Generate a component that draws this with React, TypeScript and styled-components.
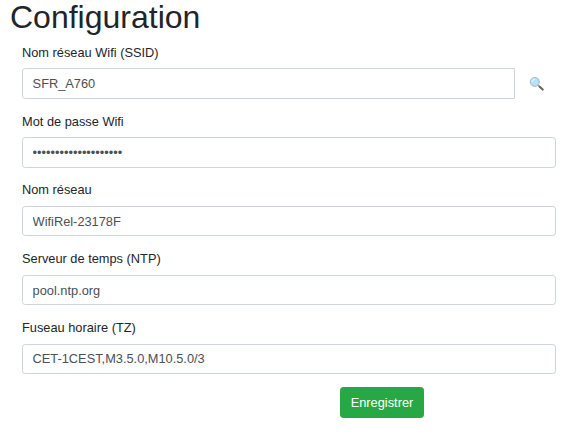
import React from "react";
import styled, { createGlobalStyle } from "styled-components";

const GlobalStyle = createGlobalStyle`
  *, *::before, *::after { box-sizing: border-box; }
  body {
    margin: 0;
    background: #fff;
    color: #212529;
    font: 400 12.8px/1.5 "Liberation Sans", Arial, sans-serif;
    overflow: hidden;
  }
`;

const Page = styled.main`
  display: flow-root;
  padding: 0 25.4px 0 10px;
`;

const Title = styled.h1`
  margin: -1.92px 0 6.4px;
  font-size: 32px;
  font-weight: 400;
  line-height: 1.2;
`;

const Form = styled.form`
  padding-left: 12px;
`;

const Field = styled.div`
  margin-bottom: 12.84px;
`;

const Label = styled.label`
  display: block;
  height: 19.2px;
  margin-bottom: 6.4px;
`;

const InputGroup = styled.div`
  display: flex;
`;

const Input = styled.input<{ $joined?: boolean }>`
  display: block;
  flex: 1;
  width: 100%;
  min-width: 0;
  height: 30.4px;
  padding: 4.8px 9.6px;
  border: 1px solid #ced4da;
  border-radius: ${(p) => (p.$joined ? "3.2px 0 0 3.2px" : "3.2px")};
  background: #fff;
  color: #495057;
  font: inherit;
  outline: none;
`;

const ScanButton = styled.button`
  display: flex;
  align-items: center;
  justify-content: center;
  width: 41px;
  height: 30.4px;
  padding: 0 0 0 4px;
  border: 0;
  background: transparent;
`;

const Actions = styled.div`
  display: flex;
  padding-left: 318px;
`;

const SaveButton = styled.button`
  width: 84px;
  height: 31px;
  padding: 1px 0 0;
  border: 1px solid #28a745;
  border-radius: 3.2px;
  background: #28a745;
  color: #fff;
  font: inherit;
`;

const SearchIcon = () => (
  <svg width="16" height="16" viewBox="0 0 16 16" aria-hidden="true">
    <path d="M9.2 9.2 10.8 10.8" stroke="#8b8b8b" strokeWidth="1.3" />
    <path d="M10.7 10.8 13.7 13.5" stroke="#666" strokeWidth="2.2" strokeLinecap="round" />
    <circle cx="5.8" cy="5.9" r="4.5" fill="#b5e2fa" stroke="#a9b6bc" strokeWidth="1" />
    <path d="M3.2 6A2.8 2.8 0 0 1 6 3.2" fill="none" stroke="#def4ff" strokeWidth="1.2" />
  </svg>
);

const fields = [
  { id: "password", label: "Mot de passe Wifi", value: "motdepassewifi123456", type: "password" },
  { id: "hostname", label: "Nom réseau", value: "WifiRel-23178F", type: "text" },
  { id: "ntp", label: "Serveur de temps (NTP)", value: "pool.ntp.org", type: "text" },
  { id: "tz", label: "Fuseau horaire (TZ)", value: "CET-1CEST,M3.5.0,M10.5.0/3", type: "text" },
];

export default function App() {
  return (
    <Page>
      <GlobalStyle />
      <Title>Configuration</Title>
      <Form>
        <Field>
          <Label htmlFor="ssid">Nom réseau Wifi (SSID)</Label>
          <InputGroup>
            <Input id="ssid" defaultValue="SFR_A760" $joined />
            <ScanButton type="button">
              <SearchIcon />
            </ScanButton>
          </InputGroup>
        </Field>
        {fields.map((f) => (
          <Field key={f.id}>
            <Label htmlFor={f.id}>{f.label}</Label>
            <Input id={f.id} type={f.type} defaultValue={f.value} />
          </Field>
        ))}
        <Actions>
          <SaveButton type="button">Enregistrer</SaveButton>
        </Actions>
      </Form>
    </Page>
  );
}
